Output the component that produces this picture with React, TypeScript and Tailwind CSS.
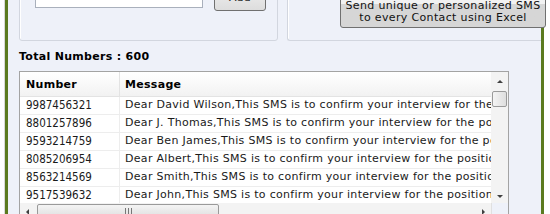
import React from "react";

const ROWS = [
  ["9987456321", "Dear David Wilson,This SMS is to confirm your interview for the position"],
  ["8801257896", "Dear J. Thomas,This SMS is to confirm your interview for the position"],
  ["9593214759", "Dear Ben James,This SMS is to confirm your interview for the position"],
  ["8085206954", "Dear Albert,This SMS is to confirm your interview for the position"],
  ["8563214569", "Dear Smith,This SMS is to confirm your interview for the position"],
  ["9517539632", "Dear John,This SMS is to confirm your interview for the position"],
];

// Tahoma-ish: wide letters, narrow digits
const sans = "font-['DejaVu_Sans',sans-serif] tracking-[0.3px]";
const digits = "font-['DejaVu_Sans_Condensed','DejaVu_Sans',sans-serif] tracking-normal";

export default function App() {
  return (
    <div className={`flex h-[214px] w-[550px] overflow-hidden bg-white ${sans} text-[11px] text-[#1a1a1a]`}>
      {/* window frame left */}
      <div className="w-[5px] shrink-0 border-r border-[#d8d8d8]" />
      <div className="w-[3px] shrink-0 bg-[#5b7a1f]" />

      <div className="flex w-[533px] shrink-0 flex-col bg-[#eef1f9] pl-[11px]">
        {/* group boxes, cut off at the top */}
        <div className="-mt-[20px] flex h-[61px] shrink-0 gap-[9px]">
          <div className="flex w-[259px] rounded-[3px] border border-[#d2d6df] pt-[2px] shadow-[inset_1px_1px_0_#fff]">
            <div className="ml-[15px] h-[25px] w-[168px] border border-[#a9b0bc] bg-white" />
            <div className="ml-[11px] flex h-[28px] w-[52px] items-end justify-center rounded-[3px] border border-[#707070] bg-gradient-to-b from-[#f2f2f2] to-[#dddddd] pb-[4px]">
              Add
            </div>
          </div>
          <div className="flex flex-1 rounded-l-[3px] border border-r-0 border-[#d2d6df] shadow-[inset_1px_1px_0_#fff]">
            <div className="relative z-10 ml-[52px] -mr-[5px] flex h-[47px] flex-1 flex-col items-center justify-end rounded-[3px] border border-[#707070] bg-gradient-to-b from-[#f2f2f2] from-50% to-[#d6d6d6] to-50% pb-[3px] text-[11px] leading-[12px] tracking-[0.35px] text-[#111]">
              <span>Send unique or personalized SMS</span>
              <span>to every Contact using Excel</span>
            </div>
          </div>
        </div>

        <div className="mt-[9px] h-[14px] font-bold leading-[14px] text-black">Total Numbers : 600</div>

        {/* grid */}
        <div className="mt-[7px] flex h-[150px] w-[490px] shrink-0 flex-col border border-[#a3a3a3] bg-white">
          <div className="flex min-h-0 flex-1">
            <div className="flex min-w-0 flex-1 flex-col overflow-hidden">
              <div className="flex h-[25px] shrink-0 items-stretch border-b border-[#e3e3e3] bg-gradient-to-b from-white to-[#f2f2f2] font-bold text-black">
                <div className="w-[100px] shrink-0 border-r border-[#e3e3e3] pl-[6px] pt-[6px] leading-[14px]">Number</div>
                <div className="pl-[5px] pt-[6px] leading-[14px]">Message</div>
              </div>
              {ROWS.map(([num, msg]) => (
                <div key={num} className="flex h-[18px] shrink-0 items-center border-b border-[#ededed]">
                  <div className={`w-[100px] shrink-0 border-r border-[#ededed] pl-[6px] text-[11.5px] leading-[17px] ${digits}`}>{num}</div>
                  <div className="whitespace-nowrap pl-[5px]">{msg}</div>
                </div>
              ))}
            </div>
            {/* vertical scrollbar */}
            <div className="flex w-[17px] shrink-0 flex-col items-center bg-[#f3f3f3]">
              <span className="mt-[8px] h-0 w-0 border-x-[3px] border-b-[3px] border-x-transparent border-b-[#404040]" />
              <div className="mt-[8px] h-[16px] w-[15px] rounded-[2px] border border-[#9a9a9a] bg-gradient-to-r from-[#f4f4f4] to-[#dedede]" />
              <div className="flex-1" />
              <span className="mb-[5px] h-0 w-0 border-x-[3px] border-t-[3px] border-x-transparent border-t-[#404040]" />
            </div>
          </div>
          {/* horizontal scrollbar */}
          <div className="flex h-[17px] shrink-0">
            <div className="flex flex-1 items-center bg-[#f3f3f3]">
              <span className="ml-[6px] h-0 w-0 border-y-[3px] border-r-[3px] border-y-transparent border-r-[#404040]" />
              <div className="ml-[8px] flex h-[15px] w-[182px] items-center justify-center rounded-[2px] border border-[#9a9a9a] bg-gradient-to-b from-[#f4f4f4] to-[#dedede]">
                <span className="flex gap-[2px]">
                  <span className="h-[7px] w-px bg-[#777]" />
                  <span className="h-[7px] w-px bg-[#777]" />
                  <span className="h-[7px] w-px bg-[#777]" />
                </span>
              </div>
              <div className="flex-1" />
              <span className="mr-[6px] h-0 w-0 border-y-[3px] border-l-[3px] border-y-transparent border-l-[#404040]" />
            </div>
            <div className="w-[17px] shrink-0 border-l border-[#e0e0e0] bg-[#eef1f9]" />
          </div>
        </div>
      </div>

      <div className="w-[3px] shrink-0 bg-[#5b7a1f]" />
      <div className="flex-1 bg-white" />
    </div>
  );
}
